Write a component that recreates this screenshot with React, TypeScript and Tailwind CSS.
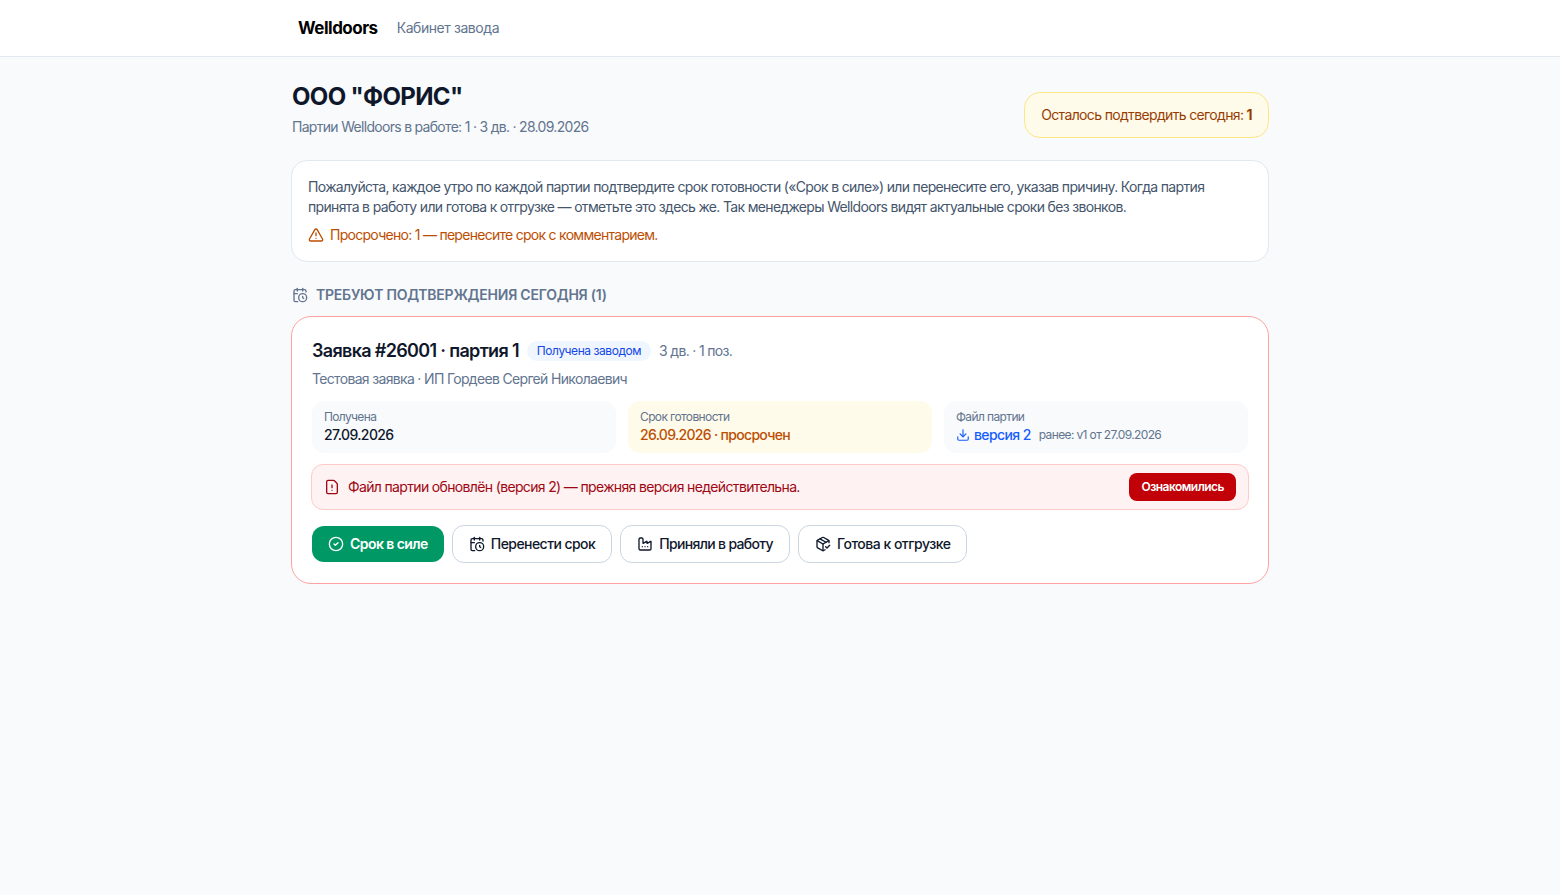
import { CalendarClock, CircleCheck, Download, Factory, FileWarning, PackageCheck, TriangleAlert } from "lucide-react";

export default function App() {
  return (
    <div className="min-h-[895px] bg-slate-50 font-['Inter',sans-serif] text-slate-900">
      <header className="h-[57px] border-b border-slate-200 bg-white">
        <div className="mx-auto flex h-full w-[978px] items-center gap-[19px] pl-[7px]">
          <span className="mt-px text-[17px] font-bold tracking-[-0.5px] text-black">Welldoors</span>
          <span className="text-sm tracking-[-0.43px] text-slate-500">Кабинет завода</span>
        </div>
      </header>

      <main className="mx-auto w-[978px] pt-[23px]">
        <div className="flex items-center justify-between">
          <div className="pl-px">
            <h1 className="text-2xl leading-8 font-bold tracking-[-0.66px]">ООО "ФОРИС"</h1>
            <p className="mt-1 text-sm leading-5 tracking-[-0.7px] text-slate-500">Партии Welldoors в работе: 1 · 3 дв. · 28.09.2026</p>
          </div>
          <div className="mt-[12px] rounded-2xl border border-amber-200 bg-amber-50 px-4 py-3 text-sm leading-5 tracking-[-0.65px] text-amber-800">
            Осталось подтвердить сегодня: <b className="font-bold">1</b>
          </div>
        </div>

        <section className="mt-[22px] rounded-2xl border border-slate-200 bg-white p-4">
          <p className="text-sm leading-5 tracking-[-0.665px] text-slate-600">
            Пожалуйста, каждое утро по каждой партии подтвердите срок готовности («Срок в силе») или перенесите его, указав причину. Когда партия принята в работу или готова к отгрузке — отметьте это здесь же. Так менеджеры Welldoors видят актуальные сроки без звонков.
          </p>
          <div className="mt-2 flex items-center gap-1.5 text-sm leading-5 tracking-[-0.72px] text-amber-700">
            <TriangleAlert size={16} />
            <span>Просрочено: 1 — перенесите срок с комментарием.</span>
          </div>
        </section>

        <h2 className="mt-[23px] flex items-center gap-2 pl-px text-sm leading-5 font-semibold tracking-[-0.23px] text-slate-500">
          <CalendarClock size={16} />
          <span>ТРЕБУЮТ ПОДТВЕРЖДЕНИЯ СЕГОДНЯ (1)</span>
        </h2>

        <section className="mt-[11px] rounded-[20px] border border-red-300 bg-white p-5">
          <div className="flex items-center gap-2">
            <h3 className="text-lg leading-7 font-semibold tracking-[-0.67px]">Заявка #26001 · партия 1</h3>
            <span className="rounded-full bg-blue-50 px-[10px] py-[2px] text-xs leading-4 tracking-[-0.44px] text-blue-700">Получена заводом</span>
            <span className="text-sm tracking-[-0.68px] text-slate-500">3 дв. · 1 поз.</span>
          </div>
          <p className="mt-1 text-sm leading-5 tracking-[-0.67px] text-slate-500">Тестовая заявка · ИП Гордеев Сергей Николаевич</p>

          <div className="mt-3 grid grid-cols-3 gap-3">
            <div className="rounded-xl bg-slate-50 px-3 py-2">
              <div className="text-xs leading-4 tracking-[-0.62px] text-slate-500">Получена</div>
              <div className="text-sm leading-5 font-medium tracking-[-0.6px]">27.09.2026</div>
            </div>
            <div className="rounded-xl bg-amber-50 px-3 py-2">
              <div className="text-xs leading-4 tracking-[-0.62px] text-slate-500">Срок готовности</div>
              <div className="text-sm leading-5 font-medium tracking-[-0.68px] text-amber-700">26.09.2026 · просрочен</div>
            </div>
            <div className="rounded-xl bg-slate-50 px-3 py-2">
              <div className="text-xs leading-4 tracking-[-0.62px] text-slate-500">Файл партии</div>
              <div className="flex items-center gap-2 text-sm leading-5">
                <span className="flex items-center gap-1 font-medium tracking-[-0.6px] text-blue-600">
                  <Download size={14} />
                  версия 2
                </span>
                <span className="text-xs tracking-[-0.63px] text-slate-500">ранее: v1 от 27.09.2026</span>
              </div>
            </div>
          </div>

          <div className="-mx-px mt-[11px] flex items-center justify-between rounded-xl border border-red-200 bg-red-50 p-2 pr-3 pl-3">
            <div className="flex items-center gap-2 text-sm tracking-[-0.65px] text-red-800">
              <FileWarning size={16} />
              <span>Файл партии обновлён (версия 2) — прежняя версия недействительна.</span>
            </div>
            <button className="h-7 rounded-lg bg-red-700 px-3 text-xs font-semibold tracking-[-0.52px] text-white">Ознакомились</button>
          </div>

          <div className="mt-[15px] flex items-center gap-2">
            <button className="flex h-9 items-center gap-1.5 rounded-xl bg-emerald-600 px-4 text-sm font-semibold tracking-[-0.56px] text-white">
              <CircleCheck size={16} />
              Срок в силе
            </button>
            <button className="flex h-[38px] items-center gap-1.5 rounded-xl border border-slate-300 bg-white px-4 text-sm font-medium tracking-[-0.56px]">
              <CalendarClock size={16} />
              Перенести срок
            </button>
            <button className="flex h-[38px] items-center gap-1.5 rounded-xl border border-slate-300 bg-white px-4 text-sm font-medium tracking-[-0.67px]">
              <Factory size={16} />
              Приняли в работу
            </button>
            <button className="flex h-[38px] items-center gap-1.5 rounded-xl border border-slate-300 bg-white px-4 text-sm font-medium tracking-[-0.51px]">
              <PackageCheck size={16} />
              Готова к отгрузке
            </button>
          </div>
        </section>
      </main>
    </div>
  );
}
